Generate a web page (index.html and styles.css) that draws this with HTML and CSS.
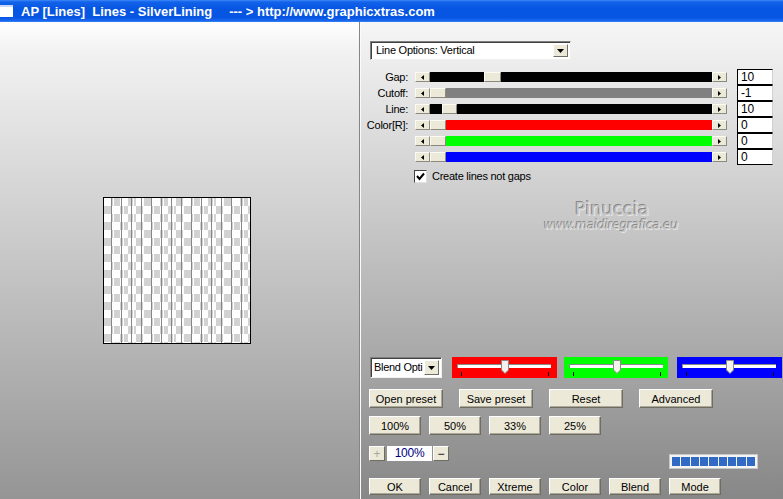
FILE: index.html
```html
<!DOCTYPE html>
<html lang="en">
<head>
<meta charset="utf-8">
<title>AP [Lines] Lines - SilverLining</title>
<link rel="stylesheet" href="styles.css">
</head>
<body>
<div class="window">
  <header class="titlebar">
    <span class="ticon"></span>
    <span class="ttext">AP [Lines]&nbsp; Lines - SilverLining</span>
    <span class="turl">--- &gt; http://www.graphicxtras.com</span>
  </header>
  <div class="main">
    <section class="left">
      <div class="preview"></div>
    </section>
    <section class="right">
      <div class="select main-select">
        <span class="sel-text">Line Options: Vertical</span>
        <span class="sel-btn"><svg width="7" height="4" viewBox="0 0 7 4"><polygon points="0,0 7,0 3.5,4" fill="#000"/></svg></span>
      </div>

      <div class="sliders">
        <div class="srow">
          <span class="slabel">Gap:</span>
          <div class="sbar">
            <span class="sbtn"><svg width="3" height="5" viewBox="0 0 3 5"><polygon points="3,0 3,5 0,2.5"/></svg></span>
            <span class="strack t-black"><span class="thumb" style="left:54px;width:17px"></span></span>
            <span class="sbtn"><svg width="3" height="5" viewBox="0 0 3 5"><polygon points="0,0 0,5 3,2.5"/></svg></span>
          </div>
          <span class="sval">10</span>
        </div>
        <div class="srow">
          <span class="slabel">Cutoff:</span>
          <div class="sbar">
            <span class="sbtn"><svg width="3" height="5" viewBox="0 0 3 5"><polygon points="3,0 3,5 0,2.5"/></svg></span>
            <span class="strack t-grey"><span class="thumb" style="left:0;width:16px"></span></span>
            <span class="sbtn"><svg width="3" height="5" viewBox="0 0 3 5"><polygon points="0,0 0,5 3,2.5"/></svg></span>
          </div>
          <span class="sval">-1</span>
        </div>
        <div class="srow">
          <span class="slabel">Line:</span>
          <div class="sbar">
            <span class="sbtn"><svg width="3" height="5" viewBox="0 0 3 5"><polygon points="3,0 3,5 0,2.5"/></svg></span>
            <span class="strack t-black"><span class="thumb" style="left:12px;width:15px"></span></span>
            <span class="sbtn"><svg width="3" height="5" viewBox="0 0 3 5"><polygon points="0,0 0,5 3,2.5"/></svg></span>
          </div>
          <span class="sval">10</span>
        </div>
        <div class="srow">
          <span class="slabel">Color[R]:</span>
          <div class="sbar">
            <span class="sbtn"><svg width="3" height="5" viewBox="0 0 3 5"><polygon points="3,0 3,5 0,2.5"/></svg></span>
            <span class="strack t-red"><span class="thumb" style="left:0;width:16px"></span></span>
            <span class="sbtn"><svg width="3" height="5" viewBox="0 0 3 5"><polygon points="0,0 0,5 3,2.5"/></svg></span>
          </div>
          <span class="sval">0</span>
        </div>
        <div class="srow">
          <span class="slabel"></span>
          <div class="sbar">
            <span class="sbtn"><svg width="3" height="5" viewBox="0 0 3 5"><polygon points="3,0 3,5 0,2.5"/></svg></span>
            <span class="strack t-green"><span class="thumb" style="left:0;width:16px"></span></span>
            <span class="sbtn"><svg width="3" height="5" viewBox="0 0 3 5"><polygon points="0,0 0,5 3,2.5"/></svg></span>
          </div>
          <span class="sval">0</span>
        </div>
        <div class="srow">
          <span class="slabel"></span>
          <div class="sbar">
            <span class="sbtn"><svg width="3" height="5" viewBox="0 0 3 5"><polygon points="3,0 3,5 0,2.5"/></svg></span>
            <span class="strack t-blue"><span class="thumb" style="left:0;width:16px"></span></span>
            <span class="sbtn"><svg width="3" height="5" viewBox="0 0 3 5"><polygon points="0,0 0,5 3,2.5"/></svg></span>
          </div>
          <span class="sval">0</span>
        </div>
      </div>

      <div class="check">
        <span class="cbox"><svg width="9" height="9" viewBox="0 0 9 9"><polyline points="1,4 3.5,7 8,1.5" fill="none" stroke="#000" stroke-width="2"/></svg></span>
        <span class="ctext">Create lines not gaps</span>
      </div>

      <div class="watermark">
        <div class="wm-name">Pinuccia</div>
        <div class="wm-url">www.maidiregrafica.eu</div>
      </div>

      <div class="bottom">
        <div class="blend-row">
          <div class="select blend-select">
            <span class="sel-text">Blend Opti</span>
            <span class="sel-btn"><svg width="7" height="4" viewBox="0 0 7 4"><polygon points="0,0 7,0 3.5,4" fill="#000"/></svg></span>
          </div>
          <div class="cslider c-red">
            <span class="ctrack"></span>
            <span class="tick tick-l"></span><span class="tick tick-r"></span>
            <svg class="cthumb" width="8" height="14" viewBox="0 0 8 14"><polygon points="0.5,0.5 7.5,0.5 7.5,10 4,13.5 0.5,10" fill="#f3f2ec" stroke="#8a8a8a"/></svg>
          </div>
          <div class="cslider c-green">
            <span class="ctrack"></span>
            <span class="tick tick-l"></span><span class="tick tick-r"></span>
            <svg class="cthumb" width="8" height="14" viewBox="0 0 8 14"><polygon points="0.5,0.5 7.5,0.5 7.5,10 4,13.5 0.5,10" fill="#f3f2ec" stroke="#8a8a8a"/></svg>
          </div>
          <div class="cslider c-blue">
            <span class="ctrack"></span>
            <span class="tick tick-l"></span><span class="tick tick-r"></span>
            <svg class="cthumb" width="8" height="14" viewBox="0 0 8 14"><polygon points="0.5,0.5 7.5,0.5 7.5,10 4,13.5 0.5,10" fill="#f3f2ec" stroke="#8a8a8a"/></svg>
          </div>
        </div>

        <div class="btn-row row-wide">
          <button class="btn">Open preset</button>
          <button class="btn">Save preset</button>
          <button class="btn">Reset</button>
          <button class="btn">Advanced</button>
        </div>

        <div class="btn-row row-small">
          <button class="btn">100%</button>
          <button class="btn">50%</button>
          <button class="btn">33%</button>
          <button class="btn">25%</button>
        </div>

        <div class="zoom-row">
          <div class="zoom">
            <button class="zbtn disabled">+</button>
            <span class="zfield">100%</span>
            <button class="zbtn">&minus;</button>
          </div>
          <div class="progress">
            <span></span><span></span><span></span><span></span><span></span><span></span><span></span><span></span><span></span>
          </div>
        </div>

        <div class="btn-row row-bottom">
          <button class="btn">OK</button>
          <button class="btn">Cancel</button>
          <button class="btn">Xtreme</button>
          <button class="btn">Color</button>
          <button class="btn">Blend</button>
          <button class="btn">Mode</button>
        </div>
      </div>
    </section>
  </div>
</div>
</body>
</html>
```

FILE: styles.css
```css
* { box-sizing: border-box; }
html, body { margin: 0; padding: 0; }
body {
  width: 783px;
  height: 499px;
  overflow: hidden;
  background: #8a8a8a;
  font-family: "Liberation Sans", Arial, sans-serif;
  font-size: 11px;
  letter-spacing: -0.25px;
  color: #000;
}
.window { width: 783px; height: 499px; display: flex; flex-direction: column; }

/* title bar */
.titlebar {
  height: 22px;
  flex: none;
  display: flex;
  align-items: center;
  color: #fff;
  font: bold 13px "Liberation Sans", Arial, sans-serif;
  letter-spacing: 0;
  white-space: nowrap;
  background: linear-gradient(180deg, #3d88f8 0, #1262ea 2px, #0656e2 40%, #0755e3 80%, #1a68ee 94%, #3f84f2 100%);
}
.ticon { flex: none; width: 13px; height: 12px; background: #fff; border-top: 2px solid #c9d9f5; margin-right: 8px; }
.turl { margin-left: 17px; }

/* layout */
.main { flex: 1; display: flex; min-height: 0; }
.left {
  width: 360px;
  flex: none;
  border-right: 1px solid #858585;
  background: linear-gradient(180deg, #ffffff 0%, #f2f2f2 6%, #959595 100%);
  padding: 175px 0 0 103px;
}
.preview {
  width: 148px;
  height: 147px;
  border: 1px solid #000;
  background-image:
    repeating-linear-gradient(90deg, transparent 0 7px, #868686 7px 8px, transparent 8px 9px, #ffffff 9px 10px),
    conic-gradient(#d2d2d2 25%, #ffffff 0 50%, #d2d2d2 0 75%, #ffffff 0);
  background-size: auto, 16px 16px;
}
.right {
  flex: 1;
  display: flex;
  flex-direction: column;
  border-left: 1px solid #fbfbfb;
  padding: 19px 0 4px 8px;
  background: linear-gradient(180deg, #f6f6f6 0%, #878787 100%);
}

/* selects */
.select {
  display: flex;
  background: #fff;
  border: 1px solid;
  border-color: #7f7f7f #f0f0f0 #f0f0f0 #7f7f7f;
  box-shadow: inset 1px 1px 0 #404040;
  padding: 2px 2px 2px 2px;
  overflow: hidden;
}
.main-select { width: 201px; height: 19px; margin-left: 1px; }
.sel-text { flex: 1; padding-left: 3px; line-height: 13px; white-space: nowrap; overflow: hidden; }
.sel-btn {
  flex: none;
  width: 15px;
  display: flex;
  align-items: center;
  justify-content: center;
  background: #ece9d8;
  border: 1px solid;
  border-color: #fff #716f64 #716f64 #fff;
}

/* slider rows */
.sliders { margin: 9px 0 0 -8px; display: flex; flex-direction: column; }
.srow { display: flex; align-items: center; height: 16px; }
.slabel { width: 47px; text-align: right; margin-right: 7px; white-space: nowrap; }
.sbar { display: flex; width: 312px; height: 10px; }
.sbtn {
  flex: none;
  width: 15px;
  display: flex;
  align-items: center;
  justify-content: center;
  background: #ece9d8;
  border: 1px solid;
  border-color: #fbfbf6 #8c8a7e #8c8a7e #fbfbf6;
}
.strack { flex: 1; position: relative; }
.t-black { background: #000; }
.t-grey { background: #808080; }
.t-red { background: #ff0000; }
.t-green { background: #00ff00; }
.t-blue { background: #0000ff; }
.thumb {
  position: absolute;
  top: 0;
  height: 10px;
  background: #ece9d8;
  border: 1px solid;
  border-color: #fbfbf6 #8c8a7e #8c8a7e #fbfbf6;
}
.sval {
  margin-left: 10px;
  width: 36px;
  height: 16px;
  background: #fff;
  border: 1px solid #000;
  border-right-color: #d0d0d0;
  padding-left: 3px;
  font-size: 12px;
  line-height: 14px;
}

/* checkbox */
.check { display: flex; align-items: center; margin: 5px 0 0 45px; height: 13px; }
.cbox {
  width: 13px;
  height: 13px;
  background: #fff;
  border: 1px solid;
  border-color: #404040 #e0e0e0 #e0e0e0 #404040;
  display: flex;
  align-items: center;
  justify-content: center;
}
.ctext { margin-left: 5px; line-height: 13px; }

/* watermark */
.watermark { margin-top: 16px; }
.wm-name {
  margin-left: 206px;
  font: 18px/20px "DejaVu Sans", sans-serif;
  letter-spacing: 0;
  color: #c4c4c4;
  text-shadow: -1px -1px 0 #858585, 1px 1px 0 #e6e6e6;
}
.wm-url {
  margin-left: 175px;
  font: italic 12px/13px "DejaVu Sans", sans-serif;
  letter-spacing: -0.2px;
  color: #c8c8c8;
  text-shadow: -1px -1px 0 #888888, 1px 1px 0 #e4e4e4;
}

/* bottom group */
.bottom { margin-top: auto; display: flex; flex-direction: column; }
.blend-row { display: flex; height: 21px; align-items: stretch; }
.blend-select { width: 72px; margin-left: 1px; }
.blend-select .sel-text { font-size: 11px; letter-spacing: -0.3px; padding-left: 1px; line-height: 15px; }
.cslider { position: relative; width: 105px; margin-left: 10px; }
.c-green { width: 104px; margin-left: 7px; }
.c-blue { margin-left: 9px; }
.c-red { background: #ff0000; }
.c-green { background: #00ff00; }
.c-blue { background: #0000ff; }
.ctrack {
  position: absolute;
  left: 5px;
  top: 7px;
  width: 94px;
  height: 4px;
  background: #fff;
  border-top: 1px solid #8a8a8a;
  border-left: 1px solid #8a8a8a;
}
.tick { position: absolute; top: 15px; width: 1px; height: 4px; background: #000; }
.tick-l { left: 9px; }
.tick-r { left: 96px; }
.cthumb { position: absolute; left: 49px; top: 3px; }

.btn-row { display: flex; }
.btn {
  font: inherit;
  padding: 0;
  margin: 0;
  height: 19px;
  display: flex;
  align-items: center;
  justify-content: center;
  background: #ece9d8;
  color: #000;
  border: 1px solid;
  border-color: #ffffff #6f6d62 #6f6d62 #ffffff;
  box-shadow: inset -1px -1px 0 #aca899;
}
.row-wide { margin-top: 11px; gap: 16px; }
.row-wide .btn { width: 74px; }
.row-small { margin-top: 8px; gap: 8px; }
.row-small .btn { width: 52px; }
.row-bottom { margin-top: 9px; gap: 8px; }
.row-bottom .btn { width: 52px; height: 17px; }

.zoom-row { display: flex; align-items: flex-start; margin-top: 11px; height: 23px; }
.zoom { display: flex; align-items: stretch; height: 15px; }
.zbtn {
  font: 12px/1 "Liberation Sans", Arial, sans-serif;
  padding: 0;
  margin: 0;
  width: 16px;
  display: flex;
  align-items: center;
  justify-content: center;
  background: #ece9d8;
  color: #000;
  border: 1px solid;
  border-color: #ffffff #6f6d62 #6f6d62 #ffffff;
}
.zbtn.disabled { color: #a8a69a; }
.zfield {
  width: 45px;
  margin: 0 1px 0 2px;
  background: #fff;
  color: #000080;
  font-size: 12px;
  line-height: 15px;
  text-align: center;
}
.progress {
  margin: 8px 25px 0 auto;
  width: 89px;
  height: 15px;
  display: flex;
  gap: 1px;
  padding: 2px;
  background: #f4f4f4;
  border: 1px solid #c8c8c8;
}
.progress span { flex: 1; background: #316ac5; }
```
